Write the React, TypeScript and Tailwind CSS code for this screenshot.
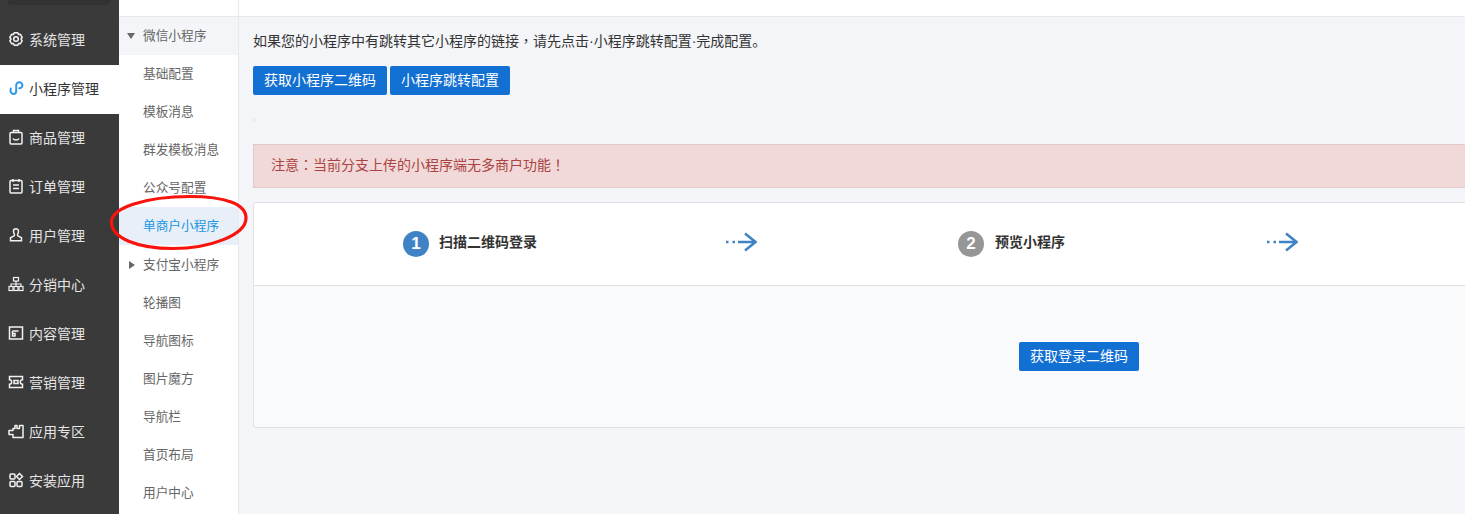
import { FC, ReactNode } from 'react';

const MainIcon: FC<{ children: ReactNode; blue?: boolean }> = ({ children, blue }) => (
  <svg
    viewBox="0 0 16 16"
    fill="none"
    stroke={blue ? '#2f9be8' : '#f2f2f2'}
    strokeWidth="1.5"
    className="w-[16px] h-[16px] shrink-0 mb-[3px]"
  >
    {children}
  </svg>
);

const mainMenu: { label: string; active?: boolean; icon: ReactNode }[] = [
  {
    label: '系统管理',
    icon: (
      <>
        <path
          d="M6.200 1.800h3.600l.7 1.800 1.900-.3 1.800 3-1.200 1.700 1.200 1.700-1.800 3-1.900-.3-.7 1.800H6.200l-.7-1.800-1.900.3-1.800-3L3 8 1.800 6.300l1.800-3 1.900.3z"
          strokeLinejoin="round"
        />
        <circle cx="8" cy="8" r="2.300" />
      </>
    ),
  },
  {
    label: '小程序管理',
    active: true,
    icon: (
      <path
        d="M2.800 8.500C1.800 11 3.500 14 5.500 14c1.800 0 2.700-1.500 2.700-3V5.500c0-1.800 1.200-3.300 3-3.300s3.200 1.500 3.200 3.200c0 1.600-1.500 2.800-3.200 2.800"
        strokeWidth="2"
        strokeLinecap="round"
      />
    ),
  },
  {
    label: '商品管理',
    icon: (
      <>
        <rect x="2" y="3.500" width="12" height="11.500" rx="1" />
        <path d="M5.500 3.500V1.500h5v2M5 9.500c1 2 5 2 6 0" />
      </>
    ),
  },
  {
    label: '订单管理',
    icon: (
      <>
        <rect x="2" y="2.500" width="12" height="12.500" rx="1" />
        <path d="M5 1v3M11 1v3M5 7h6M5 10.500h6" />
      </>
    ),
  },
  {
    label: '用户管理',
    icon: (
      <path d="M5.500 4.200a2.500 2.500 0 0 1 5 0c0 1.500-.6 2.500-1 3.300l.3 1.300 3.700 2v3H2.500v-3l3.700-2 .3-1.300c-.4-.8-1-1.800-1-3.300z" />
    ),
  },
  {
    label: '分销中心',
    icon: (
      <g strokeWidth="1.200">
        <rect x="5.500" y="1.500" width="5" height="3.500" />
        <rect x="1" y="10.500" width="4" height="4" />
        <rect x="6" y="10.500" width="4" height="4" />
        <rect x="11" y="10.500" width="4" height="4" />
        <path d="M3 10.500V8h10v2.500M8 5v5.500" />
      </g>
    ),
  },
  {
    label: '内容管理',
    icon: (
      <>
        <rect x="1.500" y="2" width="13" height="12" />
        <path d="M4.500 6h6M4.500 6v5h2.500V8.500H4.500" />
      </>
    ),
  },
  {
    label: '营销管理',
    icon: (
      <>
        <path d="M1.500 2.500h13v3.300a2.200 2.200 0 0 0 0 4.400v3.300h-13v-3.300a2.200 2.200 0 0 0 0-4.400z" />
        <rect x="6" y="6.500" width="4" height="3" />
      </>
    ),
  },
  {
    label: '应用专区',
    icon: <path d="M7 2.500h2v3h2.500v-3H15v12H5v-3H1V7.500h4v-2h2z" strokeLinejoin="round" />,
  },
  {
    label: '安装应用',
    icon: (
      <>
        <rect x="2" y="2" width="5" height="5" rx="1" />
        <path d="M11.500 1.500l3 3-3 3-3-3z" />
        <rect x="2" y="9.500" width="5" height="5" rx="1" />
        <rect x="9" y="9.500" width="5" height="5" rx="1" />
      </>
    ),
  },
];

const subMenu: { label: string; kind?: 'open' | 'closed' | 'active' }[] = [
  { label: '微信小程序', kind: 'open' },
  { label: '基础配置' },
  { label: '模板消息' },
  { label: '群发模板消息' },
  { label: '公众号配置' },
  { label: '单商户小程序', kind: 'active' },
  { label: '支付宝小程序', kind: 'closed' },
  { label: '轮播图' },
  { label: '导航图标' },
  { label: '图片魔方' },
  { label: '导航栏' },
  { label: '首页布局' },
  { label: '用户中心' },
];

const Punct: FC<{ children: ReactNode }> = ({ children }) => (
  <span className="font-['Noto_Sans_CJK_TC',sans-serif]">{children}</span>
);

const StepArrow: FC = () => (
  <svg viewBox="0 0 32 20" fill="none" stroke="#3f83c6" className="w-[32px] h-[20px] shrink-0">
    <path d="M1 10h2.500M7.500 10H10" strokeWidth="2.500" />
    <path d="M13 10h17.500M20 1.500L30.500 10 20 18.500" strokeWidth="2.500" />
  </svg>
);

const App: FC = () => {
  return (
    <div className="relative flex w-[1465px] h-[514px] overflow-hidden bg-[#f4f5f8] text-[14px] font-['Liberation_Sans','Noto_Sans_CJK_SC',sans-serif]">
      {/* main menu */}
      <div className="w-[119px] shrink-0 bg-[#3a3a3a]">
        <div className="h-[16px] pl-[7px]">
          <div className="w-[104px] h-[5px] rounded-b-[5px] bg-[#323232]" />
        </div>
        {mainMenu.map((item) => (
          <div
            key={item.label}
            className={`flex items-center gap-[5px] h-[49px] pl-[8px] ${
              item.active ? 'bg-white text-[#333333]' : 'text-[#e4e4e4]'
            }`}
          >
            <MainIcon blue={item.active}>{item.icon}</MainIcon>
            <span>{item.label}</span>
          </div>
        ))}
      </div>

      {/* sub menu */}
      <div className="w-[120px] shrink-0 bg-white border-r border-[#e8e9ec]">
        <div className="h-[17px] border-b border-[#e8e9ec]" />
        {subMenu.map((item) => (
          <div
            key={item.label}
            className={`relative flex items-center h-[38px] pl-[24px] pt-[1px] text-[12.7px] ${
              item.kind === 'active'
                ? 'bg-[#e8eff9] text-[#2196e3]'
                : item.kind === 'open'
                  ? 'bg-[#f4f5f8] text-[#666666]'
                  : item.kind === 'closed'
                    ? 'mt-[1px] text-[#666666]'
                    : 'text-[#666666]'
            }`}
          >
            {item.kind === 'open' && (
              <span className="absolute left-[8px] top-[16px] border-x-[4px] border-t-[6px] border-x-transparent border-t-[#666666]" />
            )}
            {item.kind === 'closed' && (
              <span className="absolute left-[10px] top-[15px] border-y-[4px] border-l-[6px] border-y-transparent border-l-[#666666]" />
            )}
            {item.label}
          </div>
        ))}
      </div>

      {/* content */}
      <div className="flex-1 min-w-0">
        <div className="h-[17px] bg-white border-b border-[#e8e9ec]" />
        <div className="px-[14px]">
          <p className="mt-[12px] h-[22px] leading-[22px] text-[#333333]">
            如果您的小程序中有跳转其它小程序的链接<Punct>，</Punct>请先点击·小程序跳转配置·完成配置。
          </p>
          <div className="flex gap-[3px] mt-[15px]">
            <button className="w-[134px] h-[29px] rounded-[2px] bg-[#1370d3] text-white">获取小程序二维码</button>
            <button className="w-[120px] h-[29px] rounded-[2px] bg-[#1370d3] text-white">小程序跳转配置</button>
          </div>
          <div className="w-[2px] h-[2px] mt-[24px] bg-[#e6e7ea]" />
          <div className="flex items-center w-[1652px] h-[44px] mt-[23px] pl-[17px] border border-[#e5c7c7] bg-[#f2d9d9] text-[#a94442]">
            <span className="mb-[2px]">
              注意<Punct>：</Punct>当前分支上传的小程序端无多商户功能<Punct>！</Punct>
            </span>
          </div>
          <div className="w-[1652px] h-[226px] mt-[14px] rounded-[3px] border border-[#dfe1e5] bg-[#f9fafc]">
            <div className="grid grid-cols-[555px_555px] h-[83px] rounded-t-[3px] border-b border-[#dfe1e5] bg-white font-bold text-[#333333]">
              <div className="flex items-center pl-[149px]">
                <span className="flex items-center justify-center w-[26px] h-[26px] mr-[10px] rounded-full bg-[#3f83c6] text-white text-[17px]">1</span>
                <span className="w-[286px] mb-[3px]">扫描二维码登录</span>
                <div className="mb-[4px]"><StepArrow /></div>
              </div>
              <div className="flex items-center pl-[149px]">
                <span className="flex items-center justify-center w-[26px] h-[26px] mr-[11px] rounded-full bg-[#969696] text-white text-[17px]">2</span>
                <span className="w-[271px] mb-[3px]">预览小程序</span>
                <div className="mb-[4px]"><StepArrow /></div>
              </div>
            </div>
            <div className="flex justify-center pt-[56px]">
              <button className="w-[120px] h-[29px] rounded-[2px] bg-[#1370d3] text-white">获取登录二维码</button>
            </div>
          </div>
        </div>
      </div>

      {/* red hand-drawn annotation */}
      <svg viewBox="0 0 150 70" fill="none" className="absolute left-[105px] top-[188px] w-[150px] h-[70px] pointer-events-none">
        <path
          d="M6.500 34C6.500 20 40 8.500 85 8.500c35 0 56 7.500 56 21.500 0 17-36 30.500-73 30.500C32 60.500 6.500 50 6.500 34z"
          stroke="#f8130c"
          strokeWidth="3.200"
        />
      </svg>
    </div>
  );
};

export default App;
